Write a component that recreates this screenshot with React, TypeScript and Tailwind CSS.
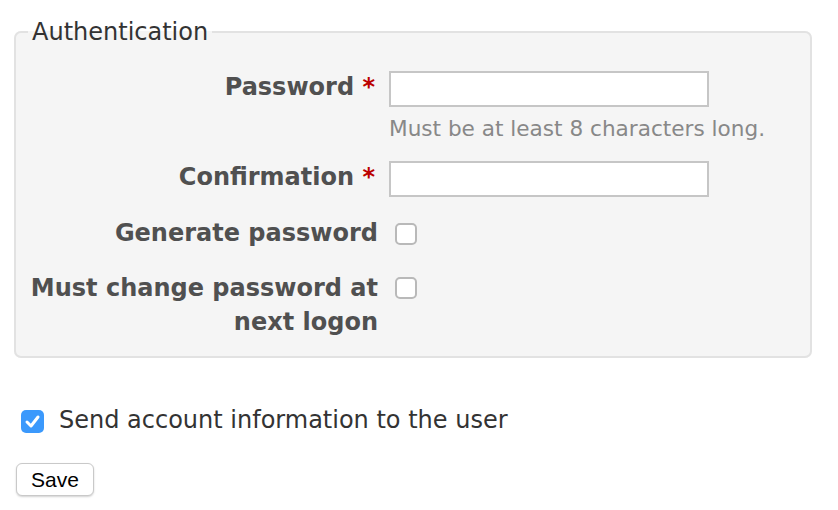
import React from "react";

const font = { fontFamily: '"DejaVu Sans", Verdana, sans-serif' };

function Box({ top }: { top: string }) {
  return (
    <span className={`${top} ml-[17px] block h-[22px] w-[22px] shrink-0 rounded-[5px] border-2 border-[#b9b9b9] bg-white`} />
  );
}

export default function App() {
  return (
    <div className="h-[510px] w-[838px] bg-white pt-[18px] pl-[14px] text-[#333]" style={font}>
      <fieldset className="w-[798px] rounded-[7px] border-2 border-[#e2e2e2] bg-[#f5f5f5] pt-[24px] pb-[17px]">
        <legend className="ml-[12px] px-[4px] text-[24px] leading-[28px] text-[#333]">Authentication</legend>

        <div className="flex items-start">
          <label className="w-[362px] shrink-0 pr-[3px] text-right text-[24px] leading-[34px] font-bold text-[#505050]">
            Password <span className="text-[#bb0000]">*</span>
          </label>
          <div className="ml-[11px]">
            <div className="mt-[1px] h-[36px] w-[320px] border-2 border-[#c6c6c6] bg-white" />
            <div className="mt-[9px] text-[21.6px] leading-[26px] text-[#888]">Must be at least 8 characters long.</div>
          </div>
        </div>

        <div className="mt-[18px] flex items-start">
          <label className="w-[362px] shrink-0 pr-[3px] text-right text-[24px] leading-[34px] font-bold text-[#505050]">
            Confirmation <span className="text-[#bb0000]">*</span>
          </label>
          <div className="mt-[1px] ml-[11px] h-[36px] w-[320px] border-2 border-[#c6c6c6] bg-white" />
        </div>

        <div className="mt-[19px] flex items-start">
          <label className="w-[362px] shrink-0 text-right text-[24px] leading-[34px] font-bold text-[#505050]">
            Generate password
          </label>
          <Box top="mt-[7px]" />
        </div>

        <div className="mt-[21px] flex items-start">
          <label className="w-[362px] shrink-0 text-right text-[24px] leading-[34px] font-bold text-[#505050]">
            Must change password at next logon
          </label>
          <Box top="mt-[6px]" />
        </div>
      </fieldset>

      <div className="mt-[45px] flex items-start">
        <span className="mt-[7px] ml-[7px] flex h-[23px] w-[23px] shrink-0 items-center justify-center rounded-[5px] bg-[#3b99fc]">
          <svg width="17" height="17" viewBox="0 0 17 17" fill="none">
            <path d="M3 9 L7 13 L14 4" stroke="white" strokeWidth="3" strokeLinecap="round" strokeLinejoin="round" />
          </svg>
        </span>
        <span className="ml-[15px] text-[24px] leading-[34px] text-[#333]">Send account information to the user</span>
      </div>

      <button
        className="mt-[26px] ml-[2px] flex h-[33px] w-[78px] items-center justify-center rounded-[6px] border border-[#c9c9c9] bg-white text-[21px] text-black shadow-[0_1px_2px_rgba(0,0,0,0.18)]"
        style={{ fontFamily: '"Liberation Sans", Arial, sans-serif' }}
      >
        Save
      </button>
    </div>
  );
}
